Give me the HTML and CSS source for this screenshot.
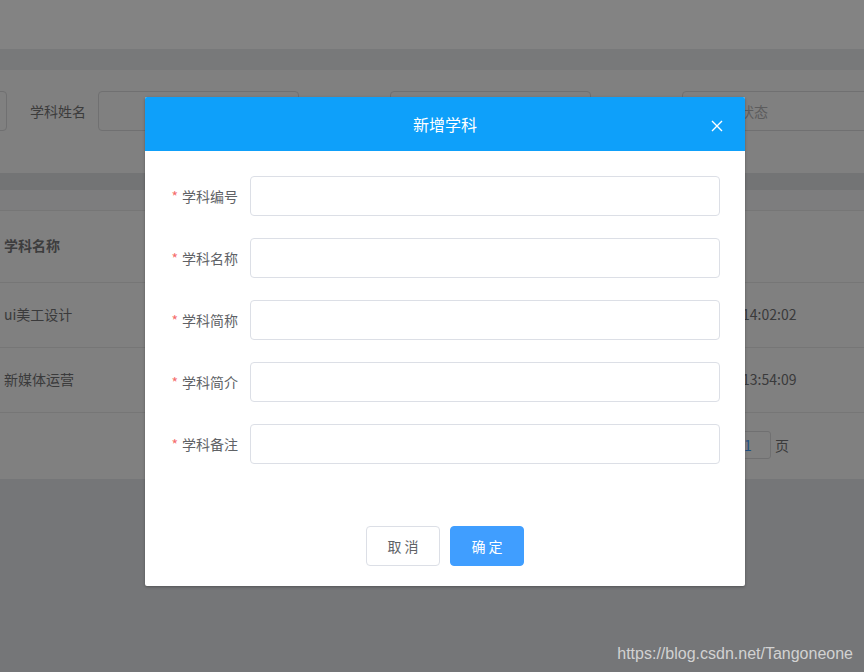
FILE: index.html
```html
<!DOCTYPE html>
<html lang="zh-CN">
<head>
<meta charset="utf-8">
<title>新增学科</title>
<link rel="stylesheet" href="styles.css">
</head>
<body>
<div class="page">
  <div class="topbar"></div>
  <div class="gap"></div>
  <div class="search-card">
    <div class="search-row">
      <div class="field"><span class="s-label"></span><span class="s-input"></span></div>
      <div class="field"><span class="s-label">学科姓名</span><span class="s-input"></span></div>
      <div class="field"><span class="s-label">创建者</span><span class="s-input"></span></div>
      <div class="field"><span class="s-label">状态</span><span class="s-input"><span class="ph">请选择状态</span></span></div>
    </div>
  </div>
  <div class="band-dark"></div>
  <div class="band-light"></div>
  <div class="table">
    <div class="tr th"><span class="c-name">学科名称</span><span class="c-time">创建日期</span></div>
    <div class="tr"><span class="c-name">ui美工设计</span><span class="c-time">2020-08-10 14:02:02</span></div>
    <div class="tr"><span class="c-name">新媒体运营</span><span class="c-time">2020-08-10 13:54:09</span></div>
    <div class="pager"><span>前往</span><span class="p-input">1</span><span>页</span></div>
  </div>
</div>

<div class="dialog">
  <div class="dlg-head">
    <span class="dlg-title">新增学科</span>
    <svg class="dlg-close" width="12" height="12" viewBox="0 0 12 12"><path d="M1 1 L11 11 M11 1 L1 11" stroke="#ffffff" stroke-width="1.4" fill="none"/></svg>
  </div>
  <div class="dlg-body">
    <div class="f-row"><label class="f-label"><i>*</i>学科编号</label><span class="f-input"></span></div>
    <div class="f-row"><label class="f-label"><i>*</i>学科名称</label><span class="f-input"></span></div>
    <div class="f-row"><label class="f-label"><i>*</i>学科简称</label><span class="f-input"></span></div>
    <div class="f-row"><label class="f-label"><i>*</i>学科简介</label><span class="f-input"></span></div>
    <div class="f-row"><label class="f-label"><i>*</i>学科备注</label><span class="f-input"></span></div>
  </div>
  <div class="dlg-foot">
    <button class="btn">取 消</button>
    <button class="btn primary">确 定</button>
  </div>
</div>

<div class="watermark">https://blog.csdn.net/Tangoneone</div>
</body>
</html>
```

FILE: styles.css
```css
html, body {
  margin: 0;
  padding: 0;
}
body {
  width: 864px;
  height: 672px;
  overflow: hidden;
  position: relative;
  background: #757678;
  font-family: "Noto Sans CJK SC", "Noto Sans", sans-serif;
  font-size: 14px;
  color: #3a3a3b;
}
.page {
  display: flex;
  flex-direction: column;
}
.topbar { height: 49px; background: #838383; }
.gap { height: 21px; background: #78797a; }
.search-card {
  height: 103px;
  background: #808080;
  overflow: hidden;
}
.search-row {
  display: flex;
  margin-left: -285px;
  padding-top: 21px;
}
.field {
  display: flex;
  align-items: center;
  flex: none;
  margin-left: 23px;
}
.s-label {
  width: 56px;
  margin-right: 12px;
  white-space: nowrap;
  line-height: 20px;
  color: #3c3c3c;
}
.s-input {
  box-sizing: border-box;
  width: 201px;
  height: 40px;
  border: 1px solid #707071;
  border-radius: 4px;
  display: flex;
  align-items: center;
  padding-left: 15px;
}
.ph { color: #5c5c5d; white-space: nowrap; }
.band-dark { height: 17px; background: #737475; }
.band-light { height: 20px; background: #7d7d7e; }
.table {
  background: #808080;
}
.tr {
  box-sizing: border-box;
  display: flex;
  align-items: center;
  justify-content: space-between;
  border-top: 1px solid #767676;
  height: 65px;
  padding: 0 0 3px 4px;
  color: #3a3a3b;
}
.tr.th { height: 72px; font-weight: bold; color: #3d3d3e; }
.c-time {
  width: 197px;
  white-space: nowrap;
}
.pager {
  box-sizing: border-box;
  border-top: 1px solid #767676;
  height: 67px;
  display: flex;
  align-items: center;
  justify-content: flex-end;
  gap: 4px;
  padding: 0 75px 3px 0;
}
.p-input {
  box-sizing: border-box;
  width: 46px;
  height: 28px;
  border: 1px solid #707071;
  border-radius: 3px;
  display: flex;
  align-items: center;
  justify-content: center;
  color: #1f4f80;
}

.dialog {
  position: absolute;
  left: 145px;
  top: 97px;
  width: 600px;
  background: #ffffff;
  border-radius: 2px;
  box-shadow: 0 1px 3px rgba(0, 0, 0, 0.3);
  overflow: hidden;
}
.dlg-head {
  height: 54px;
  background: #0ea0fa;
  display: flex;
  align-items: center;
  justify-content: center;
  position: relative;
}
.dlg-title {
  color: #ffffff;
  font-size: 16px;
  line-height: 24px;
}
.dlg-close {
  position: absolute;
  right: 22px;
  top: 23px;
}
.dlg-body {
  padding: 25px 25px 0 0;
  display: flex;
  flex-direction: column;
  gap: 22px;
}
.f-row {
  display: flex;
  align-items: center;
}
.f-label {
  width: 93px;
  margin-right: 12px;
  text-align: right;
  color: #606266;
  font-size: 14px;
  white-space: nowrap;
  padding-bottom: 1px;
}
.f-label i {
  font-style: normal;
  color: #f56c6c;
  margin-right: 4px;
}
.f-input {
  box-sizing: border-box;
  width: 470px;
  height: 40px;
  border: 1px solid #dcdfe6;
  border-radius: 4px;
}
.dlg-foot {
  display: flex;
  justify-content: center;
  gap: 10px;
  padding: 62px 0 20px;
}
.btn {
  box-sizing: border-box;
  width: 74px;
  height: 40px;
  border: 1px solid #dcdfe6;
  border-radius: 4px;
  background: #ffffff;
  color: #606266;
  font-family: "Noto Sans CJK SC", "Noto Sans", sans-serif;
  font-size: 14px;
  padding: 0;
}
.btn.primary {
  background: #409eff;
  border-color: #409eff;
  color: #ffffff;
}
.watermark {
  position: absolute;
  right: 11px;
  bottom: 9px;
  font-family: "Liberation Sans", Arial, sans-serif;
  font-size: 16px;
  color: #d2d2d2;
  line-height: 18px;
}
```
